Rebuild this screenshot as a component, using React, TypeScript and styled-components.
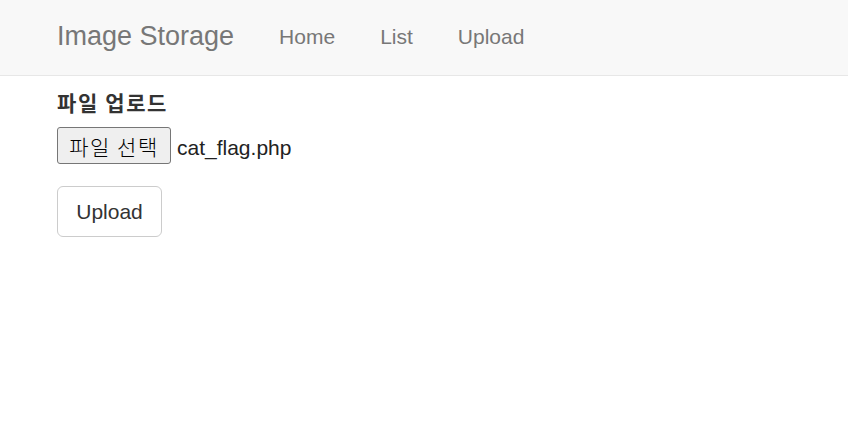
import React from "react";
import styled, { createGlobalStyle } from "styled-components";

const Global = createGlobalStyle`
  html, body { margin: 0; padding: 0; background: #fff; }
  body {
    font-family: "Liberation Sans", Arial, "Noto Sans CJK KR", sans-serif;
    font-size: 21px;
    line-height: 1.42857;
    color: #333;
  }
`;

const NavBar = styled.nav`
  height: 75px;
  background: #f8f8f8;
  border-bottom: 1px solid #e7e7e7;
  display: flex;
  align-items: center;
  padding-left: 57px;
`;

const Brand = styled.a`
  font-size: 27px;
  color: #777;
  text-decoration: none;
  margin-right: 45px;
  line-height: 1;
  margin-top: -2px;
`;

const NavList = styled.ul`
  display: flex;
  list-style: none;
  margin: 0;
  padding: 0;
  gap: 45px;
  margin-top: -2px;
`;

const NavLink = styled.a`
  font-size: 21px;
  color: #777;
  text-decoration: none;
`;

const Main = styled.main`
  padding: 11px 57px 0;
  display: flex;
  flex-direction: column;
  align-items: flex-start;
`;

const Label = styled.label`
  font-weight: bold;
  font-size: 21px;
  letter-spacing: 1.6px;
  line-height: 30px;
  font-family: "Noto Sans CJK KR", "Liberation Sans", sans-serif;
  color: #333;
`;

const FileRow = styled.div`
  display: flex;
  align-items: center;
  margin-top: 10px;
  gap: 6px;
`;

const FileButton = styled.button`
  box-sizing: border-box;
  height: 37px;
  width: 114px;
  background: #efefef;
  border: 1px solid #767676;
  border-radius: 3px;
  font-family: "Noto Sans CJK KR", sans-serif;
  font-weight: 300;
  font-size: 21px;
  letter-spacing: 1.5px;
  color: #000;
  padding: 0;
  display: flex;
  align-items: center;
  justify-content: center;
`;

const FileName = styled.span`
  font-size: 21px;
  color: #222;
  padding-top: 5px;
`;

const UploadButton = styled.button`
  box-sizing: border-box;
  margin-top: 22px;
  height: 51px;
  width: 105px;
  background: #fff;
  border: 1px solid #ccc;
  border-radius: 6px;
  font-family: "Liberation Sans", Arial, sans-serif;
  font-size: 21px;
  color: #333;
  padding: 0;
`;

export default function App() {
  return (
    <>
      <Global />
      <NavBar>
        <Brand href="#">Image Storage</Brand>
        <NavList>
          <li><NavLink href="#">Home</NavLink></li>
          <li><NavLink href="#">List</NavLink></li>
          <li><NavLink href="#">Upload</NavLink></li>
        </NavList>
      </NavBar>
      <Main>
        <Label>파일 업로드</Label>
        <FileRow>
          <FileButton type="button">파일 선택</FileButton>
          <FileName>cat_flag.php</FileName>
        </FileRow>
        <UploadButton type="button">Upload</UploadButton>
      </Main>
    </>
  );
}
